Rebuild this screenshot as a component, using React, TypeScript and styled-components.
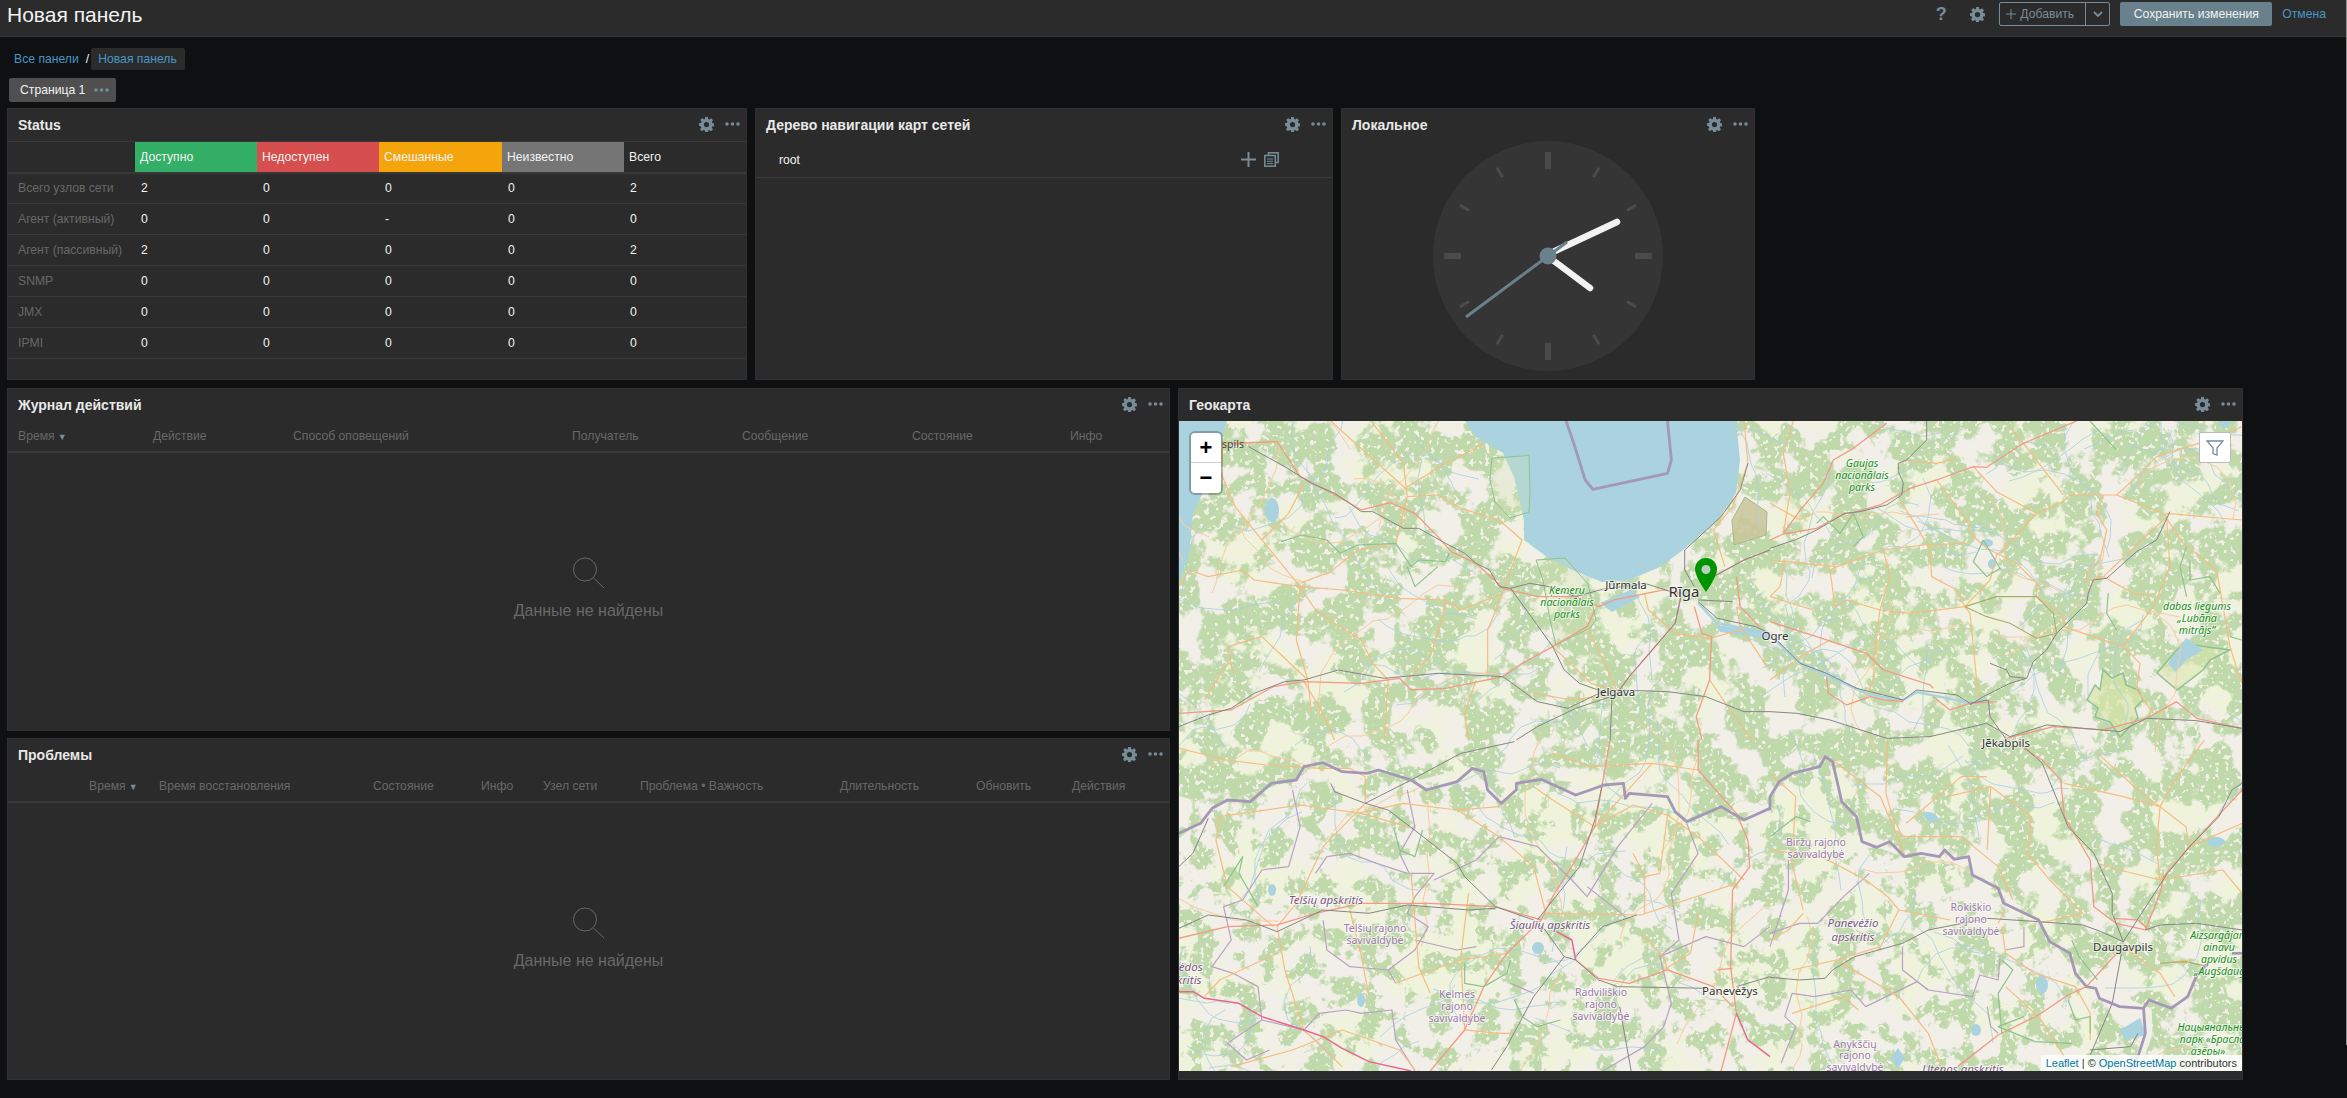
import React from "react";
import styled, { createGlobalStyle } from "styled-components";

const Global = createGlobalStyle`
  html, body { margin: 0; padding: 0; background: #0e1012; }
  body { font-family: "Liberation Sans", Arial, sans-serif; font-size: 12.2px; color: #f2f2f2; overflow: hidden; }
  * { box-sizing: border-box; }
`;

const Page = styled.div`
  position: relative;
  width: 2347px;
  height: 1098px;
  overflow: hidden;
  background: #0e1012;
`;
const ScrollEdge = styled.div`
  position: absolute;
  top: 0;
  right: 0;
  width: 1px;
  height: 1045px;
  background: #8f8f8f;
`;
const Header = styled.header`
  height: 37px;
  background: #2b2b2b;
  border-bottom: 1px solid #383838;
  display: flex;
  align-items: flex-start;
  padding: 2px 21px 0 7px;
`;
const Title = styled.h1`
  margin: 0;
  font-size: 21px;
  line-height: 26px;
  font-weight: 400;
  color: #f2f2f2;
  flex: 1;
`;
const HeaderIcon = styled.span`
  width: 36px;
  height: 24px;
  display: flex;
  align-items: center;
  justify-content: center;
  color: #768d99;
  font-size: 18px;
  font-weight: 700;
`;
const AddButton = styled.div`
  width: 111px;
  height: 24px;
  margin-left: 4px;
  border: 1px solid #768d99;
  border-radius: 2px;
  display: flex;
  align-items: center;
  color: #768d99;
`;
const AddMain = styled.span`
  width: 86px;
  display: flex;
  align-items: center;
  gap: 4px;
  padding-left: 6px;
  height: 100%;
  border-right: 1px solid #768d99;
`;
const AddCaret = styled.span`
  flex: 1;
  display: flex;
  justify-content: center;
`;
const SaveButton = styled.div`
  width: 152px;
  height: 24px;
  margin-left: 10px;
  border-radius: 2px;
  background: #69808d;
  color: #f2f2f2;
  display: flex;
  align-items: center;
  justify-content: center;
`;
const CancelLink = styled.a`
  margin-left: 10px;
  line-height: 24px;
  color: #4796c4;
`;
const Crumbs = styled.nav`
  height: 22px;
  margin: 11px 0 0 14px;
  display: flex;
  align-items: center;
  color: #f2f2f2;
`;
const CrumbLink = styled.a`
  color: #4796c4;
`;
const CrumbSep = styled.span`
  margin: 0 2px 0 7px;
`;
const CrumbCurrent = styled.a`
  color: #4796c4;
  background: #2b2b2b;
  border-radius: 2px;
  height: 22px;
  line-height: 22px;
  padding: 0 8px 0 7px;
`;
const Tab = styled.div`
  width: 107px;
  height: 24px;
  margin: 8px 0 6px 9px;
  background: #4f4f4f;
  border-radius: 2px;
  display: flex;
  align-items: center;
  justify-content: space-between;
  padding: 0 7px 0 11px;
  color: #f2f2f2;
`;
const Dashboard = styled.main`
  display: flex;
  flex-direction: column;
  gap: 8px;
  padding-left: 7px;
`;
const Row = styled.div`
  display: flex;
  gap: 8px;
`;
const Column = styled.div`
  display: flex;
  flex-direction: column;
  gap: 7px;
`;
const Panel = styled.section<{ $w: number; $h: number }>`
  width: ${(p) => p.$w}px;
  height: ${(p) => p.$h}px;
  background: #2b2b2b;
  border: 1px solid #303030;
  display: flex;
  flex-direction: column;
  overflow: hidden;
  flex: none;
`;
const PanelHead = styled.div`
  height: 32px;
  flex: none;
  display: flex;
  align-items: flex-start;
  padding: 0 6px 0 10px;
`;
const PanelTitle = styled.h4`
  margin: 0;
  flex: 1;
  font-size: 14px;
  line-height: 33px;
  font-weight: 700;
  color: #e8e8e8;
`;
const PanelTools = styled.div`
  display: flex;
  align-items: center;
  gap: 11px;
  height: 30px;
  color: #768d99;
`;
const StatusTable = styled.table`
  width: 100%;
  table-layout: fixed;
  border-collapse: collapse;
`;
const Th = styled.th<{ $bg?: string }>`
  height: 31px;
  padding: 0 5px;
  text-align: left;
  font-weight: 400;
  color: #f2f2f2;
  background: ${(p) => p.$bg || "transparent"};
`;
const HeadRow = styled.tr`
  border-top: 1px solid #383838;
  border-bottom: 2px solid #383838;
`;
const BodyRow = styled.tr`
  border-bottom: 1px solid #383838;
`;
const LabelCell = styled.td`
  height: 31px;
  padding: 0 0 0 10px;
  color: #686868;
  white-space: nowrap;
`;
const ValueCell = styled.td`
  padding: 0 0 0 6px;
  color: #f2f2f2;
`;
const TreeRow = styled.div`
  height: 33px;
  margin-top: 4px;
  flex: none;
  display: flex;
  align-items: center;
  border-bottom: 1px solid #383838;
  padding: 0 0 3px 23px;
  color: #f2f2f2;
`;
const TreeName = styled.span`
  flex: 1;
`;
const TreeTools = styled.span`
  display: flex;
  gap: 8px;
  margin-right: 53px;
  color: #768d99;
`;
const ClockWrap = styled.div`
  flex: 1;
  display: flex;
  justify-content: center;
`;
const ColumnsHead = styled.div<{ $cols: string; $pad: number }>`
  height: 32px;
  flex: none;
  display: grid;
  grid-template-columns: ${(p) => p.$cols};
  align-items: center;
  border-bottom: 2px solid #383838;
  color: #686868;
  padding-left: ${(p) => p.$pad}px;
`;
const Arrow = styled.span`
  color: #768d99;
  font-size: 9px;
  margin-left: 3px;
`;
const Empty = styled.div`
  flex: 1;
  display: flex;
  flex-direction: column;
  align-items: center;
  justify-content: center;
  padding-bottom: 6px;
  color: #686868;
  font-size: 16px;
`;
const EmptyText = styled.div`
  line-height: 18px;
  margin-top: 13px;
`;
const MapArea = styled.div`
  position: relative;
  width: 1063px;
  height: 650px;
  flex: none;
  overflow: hidden;
  background: #f2efe9;
`;
const MapSvg = styled.svg`
  display: block;
  width: 1063px;
  height: 650px;
`;
const ZoomBox = styled.div`
  position: absolute;
  left: 12px;
  top: 12px;
  width: 30px;
  border-radius: 4px;
  outline: 2px solid rgba(0, 0, 0, 0.25);
  background: #fff;
  overflow: hidden;
`;
const ZoomBtn = styled.div<{ $first?: boolean }>`
  height: 30px;
  background: #fff;
  color: #000;
  display: flex;
  align-items: center;
  justify-content: center;
  font: 700 22px/30px "Liberation Sans", Arial, sans-serif;
  border-bottom: ${(p) => (p.$first ? "1px solid #ccc" : "none")};
`;
const FilterBtn = styled.div`
  position: absolute;
  right: 11px;
  top: 11px;
  width: 32px;
  height: 31px;
  background: #fff;
  border-radius: 2px;
  border: 1px solid #bbb;
  color: #768d99;
  display: flex;
  align-items: center;
  justify-content: center;
`;
const Attribution = styled.div`
  position: absolute;
  right: 0;
  bottom: 0;
  height: 16px;
  padding: 0 5px;
  background: rgba(255, 255, 255, 0.8);
  color: #333;
  font: 11px/16px "Liberation Sans", Arial, sans-serif;
`;
const AttrLink = styled.a`
  color: #0078a8;
`;
const MapText = styled.text<{ $kind: string }>`
  font-family: "Noto Sans", "Open Sans", sans-serif;
  font-size: ${(p) => (p.$kind === "capital" ? 15 : p.$kind === "city" ? 11.5 : p.$kind === "region" ? 11.5 : 10.5)}px;
  font-style: ${(p) => (p.$kind === "park" || p.$kind === "region" ? "italic" : "normal")};
  fill: ${(p) =>
    p.$kind === "park" ? "#1b8f1b" : p.$kind === "region" ? "#7d5a88" : p.$kind === "muni" ? "#9a7ba6" : "#333"};
  text-anchor: middle;
  paint-order: stroke;
  stroke: rgba(255, 255, 255, 0.6);
  stroke-width: 2px;
`;

const Gear = ({ size = 15 }: { size?: number }) => (
  <svg width={size} height={size} viewBox="0 0 16 16" fill="currentColor" aria-hidden>
    <path d="M6.6 0h2.8l.4 2.2 1.2.5 1.9-1.3 2 2-1.3 1.9.5 1.2 2.2.4v2.8l-2.2.4-.5 1.2 1.3 1.9-2 2-1.9-1.3-1.2.5-.4 2.2H6.6l-.4-2.2-1.2-.5-1.9 1.3-2-2 1.3-1.9-.5-1.2L0 9.4V6.6l2.2-.4.5-1.2-1.3-1.9 2-2L5.300 2.700l1-.5zM8 5.200a2.800 2.800 0 100 5.600 2.800 2.800 0 000-5.600z" fillRule="evenodd" />
  </svg>
);
const Dots = () => (
  <svg width="15" height="4" viewBox="0 0 15 4" fill="currentColor" aria-hidden>
    <circle cx="2" cy="2" r="1.8" />
    <circle cx="7.500" cy="2" r="1.8" />
    <circle cx="13" cy="2" r="1.8" />
  </svg>
);
const Plus = ({ size = 15, w = 2 }: { size?: number; w?: number }) => (
  <svg width={size} height={size} viewBox="0 0 15 15" stroke="currentColor" strokeWidth={w} aria-hidden>
    <path d="M7.500 0v15M0 7.500h15" />
  </svg>
);
const Copy = () => (
  <svg width="15" height="15" viewBox="0 0 15 15" fill="none" stroke="currentColor" strokeWidth="1.500" aria-hidden>
    <path d="M4.500 3V.8h9.700v9.700H12" />
    <rect x=".8" y="3.500" width="10.500" height="10.700" />
    <path d="M3 7h6M3 9.300h6M3 11.600h6" strokeWidth="1" />
  </svg>
);
const Search = () => (
  <svg width="32" height="32" viewBox="0 0 32 32" fill="none" stroke="#686868" strokeWidth="1" aria-hidden>
    <circle cx="12" cy="12.500" r="11.500" />
    <path d="M20.500 21l10.500 10" />
  </svg>
);

const ClockFace = styled.svg`
  display: block;
`;
const Clock = () => {
  const ticks = [];
  for (let i = 0; i < 12; i++) {
    const major = i % 3 === 0;
    ticks.push(
      <rect
        key={i}
        x={major ? 112 : 113.5}
        y={major ? 11 : 13}
        width={major ? 6 : 3}
        height={major ? 17 : 11}
        fill="#4b4b4b"
        transform={`rotate(${i * 30} 115 115)`}
      />
    );
  }
  return (
    <ClockFace width="230" height="230" viewBox="0 0 230 230" aria-hidden>
      <circle cx="115" cy="115" r="115" fill="#353535" />
      {ticks}
      <line x1="122" y1="110" x2="184" y2="81" stroke="#f2f2f2" strokeWidth="6.500" strokeLinecap="round" />
      <line x1="121" y1="120" x2="157" y2="147" stroke="#f2f2f2" strokeWidth="6.500" strokeLinecap="round" />
      <line x1="33" y1="176" x2="134" y2="101" stroke="#69808d" strokeWidth="3" />
      <circle cx="115" cy="115" r="8.500" fill="#69808d" />
    </ClockFace>
  );
};

type Line = [string, string];
const A: Line[] = [
  ["primary", "M1500 123 L1510 250 L1470 380 L1420 450 L1450 560"],
  ["primary", "M340 620 L240 480 L170 380 L130 270 L140 190"],
  ["primary", "M340 620 L450 630 L600 655 L720 660 L760 690 L870 640"],
  ["primary", "M340 610 L420 575 L490 510 L590 490 L620 350 L610 250 L530 130"],
  ["primary", "M240 480 L310 400 L350 310"],
  ["primary", "M620 350 L700 345 L760 385 L860 420 L920 480 L890 570 L870 630"],
  ["primary", "M620 320 L720 250 L790 210 L820 190"],
  ["primary", "M340 620 L380 690 L430 730 L500 780 L530 850 L570 900"],
  ["primary", "M720 660 L710 720 L680 830 L620 900"],
  ["primary", "M870 640 L830 750 L830 880"],
  ["primary", "M340 620 L330 780 L360 900 L370 1000"],
  ["primary", "M340 620 L220 600 L190 570 L100 590 L50 570 L23 620"],
  ["primary", "M360 900 L240 770 L150 800 L165 880"],
  ["primary", "M150 850 L90 960"],
  ["primary", "M1000 800 L1100 910 L1160 930"],
  ["primary", "M1090 740 L1140 860 L1170 940"],
  ["primary", "M1240 640 L1250 690 L1320 760 L1410 775 L1490 750"],
  ["primary", "M1480 680 L1490 740 L1560 860"],
  ["primary", "M1410 900 L1470 1000 L1520 1080"],
  ["primary", "M140 190 L280 185"],
  ["primary", "M420 123 L620 330"],
  ["primary", "M570 900 L560 1080"],
  ["primary", "M800 900 L770 1000 L780 1080"],
  ["primary", "M350 905 L400 1000 L430 1080"],
  ["primary", "M950 940 L1050 960 L1150 945"],
  ["trunk", "M160 190 L280 185 L340 290 L440 350 L500 390 L575 368 L640 400 L700 470 L735 515 L800 550 L870 625 L960 650 L1060 650 L1120 680 L1160 660 L1290 630 L1340 640"],
  ["trunk", "M1110 690 L1090 740 L1000 800 L920 850 L870 890 L720 925 L630 930 L600 895 L500 910 L350 905 L270 920 L160 990 L23 1000"],
  ["trunk", "M1335 650 L1320 730 L1260 810 L1200 890 L1165 945"],
  ["trunk", "M1370 680 L1390 760 L1415 770 L1410 900 L1375 1010 L1390 1080"],
  ["trunk", "M1420 590 L1500 540 L1568 510"],
  ["trunk", "M1480 590 L1490 680 L1540 740"],
  ["rail", "M205 200 L300 260 L370 310 L430 340 L470 370 L500 395 L530 395 L610 445 L650 445 L720 490 L770 520 L800 550 L835 570 L860 620 L890 625 L940 610 L990 620 L1060 650 L1130 628 L1180 620 L1240 610 L1310 635"],
  ["rail", "M890 625 L950 720 L1000 800 L1030 870 L1070 910 L1130 935"],
  ["rail", "M1130 935 L1040 985 L960 965 L870 890 L700 880 L560 895 L440 870 L350 900 L300 905 L220 940 L160 985 L100 1005 L23 1040"],
  ["rail", "M1335 650 L1320 730 L1260 810 L1200 890 L1165 945 L1060 985 L960 1040 L905 1080"],
  ["rail", "M1165 930 L1300 935 L1400 950 L1500 995 L1568 995"],
  ["rail", "M1155 950 L1150 1080"],
  ["rail", "M1380 665 L1430 715 L1530 740 L1568 760"],
  ["rail", "M1420 590 L1500 540 L1568 510"],
  ["rail", "M1510 250 L1490 330 L1440 410 L1345 510 L1345 570 L1370 620"],
  ["rail", "M1380 660 L1470 665"],
  ["border", "M1035 123 L1055 190 L1085 300 L1105 328 L1300 280 L1310 240 L1300 123"],
  ["park", "M290 485 L345 465 L410 480 L445 520 L490 495 L590 490 L630 560 L650 540 L720 545 L730 520"],
  ["park", "M620 560 L640 620 L700 560"],
];
const B: Line[] = [
  ["primary", "M500 300 L560 380 L595 430 L600 460 L650 505 L690 525 L740 550 L800 610 L800 650 L870 700 L890 735"],
  ["primary", "M610 260 L680 335 L800 400 L880 365 L900 345 L1040 345 L1180 400 L1240 490 L1340 570 L1380 800 L1415 910"],
  ["primary", "M800 400 L700 510 L680 525 L660 600 L585 680"],
  ["primary", "M390 360 L440 440 L480 510 L485 590 L560 630 L585 680 L600 700 L620 900 L630 955"],
  ["primary", "M340 510 L460 495 L590 490"],
  ["primary", "M340 510 L200 560 L0 540"],
  ["primary", "M200 560 L180 570 L195 680 L230 660 L330 690 L420 700 L585 680"],
  ["primary", "M330 690 L315 800 L310 900 L290 950"],
  ["primary", "M130 690 L0 650"],
  ["primary", "M880 740 L1060 800 L1110 850 L1100 930 L1150 1000"],
  ["primary", "M1060 800 L1150 680 L1200 560 L1190 410"],
  ["primary", "M1000 345 L980 400 L1010 450 L990 540 L950 580 L950 610"],
  ["primary", "M960 600 L1000 590 L1180 420"],
  ["primary", "M760 190 L880 345"],
  ["primary", "M720 140 L760 190"],
  ["primary", "M1190 400 L1415 420"],
  ["primary", "M1040 345 L1100 290 L1160 230 L1350 170 L1415 140"],
  ["primary", "M1000 590 L1090 640 L1150 650"],
  ["primary", "M70 123 L40 220 L60 340 L40 460"],
  ["primary", "M0 370 L90 420 L130 400"],
  ["primary", "M340 510 L360 590 L330 690"],
  ["primary", "M180 780 L90 830 L0 900"],
  ["primary", "M45 540 L30 620 L0 650"],
  ["primary", "M400 240 L500 250 L560 235"],
  ["trunk", "M0 480 L40 462 L140 445 L225 400 L250 398 L330 375 L420 325 L500 300 L610 260 L650 262 L760 190 L920 123"],
  ["trunk", "M40 460 L95 385 L160 310 L190 240 L250 205 L350 130"],
  ["trunk", "M0 725 L170 780 L290 820 L340 870 L480 915 L490 925"],
  ["trunk", "M170 890 L175 940 L230 975 L300 950 L340 960 L400 965"],
  ["trunk", "M490 950 L540 990 L600 970 L680 965"],
  ["trunk", "M710 1075 L850 1040 L1000 1050 L1130 1015 L1220 965 L1280 1015 L1415 1045"],
  ["rail", "M0 505 L80 478 L140 450 L225 400 L270 395 L350 375 L395 345 L400 310 L385 275 L385 250 L410 240 L470 180 L470 123"],
  ["rail", "M1200 395 L1160 480 L1100 515 L1010 595 L970 600 L955 640 L950 670 L880 740 L860 760 L830 810 L790 845 L770 895 L720 910 L640 950 L600 975"],
  ["rail", "M660 850 L710 870 L720 890 L770 895"],
  ["rail", "M20 780 L90 850 L170 880 L260 925 L400 960 L440 930 L560 945 L600 970 L655 960 L660 1010 L710 1080"],
  ["rail", "M0 995 L80 1000 L180 1020 L350 1075 L480 1070 L650 1030 L720 1070 L830 1035 L1050 1055 L1130 1015 L1280 1022 L1415 1045"],
  ["park", "M960 123 L1030 200 L1040 210"],
  ["park", "M140 430 L160 410 L210 460 L250 400 L280 470 L250 500"],
  ["park", "M640 480 L610 545 L650 590 L690 565 L640 480"],
  ["park", "M1250 500 L1230 560 L1250 650"],
  ["park", "M1015 640 L1010 700 L1040 750"],
  ["park", "M1260 540 L1260 600 L1320 590 L1350 640"],
  ["park", "M1380 770 L1415 780"],
  ["olive", "M585 680 L650 710 L720 730 L800 775 L860 760 L850 700 L800 650 L680 650 L585 680"],
];
const C: Line[] = [
  ["admin", "M320 150 L340 260 L310 380 L240 390 L190 480 L140 500 L160 600 L110 680 L165 700 L230 740 L240 840 L350 870 L390 820 L460 810 L500 820 L580 810 L590 900 L640 993"],
  ["admin", "M620 150 L640 260 L600 340 L625 400 L690 400 L640 470 L620 520 L675 560 L640 630 L570 690 L590 730"],
  ["admin", "M380 400 L410 350 L470 340 L540 370 L620 400"],
  ["admin", "M400 540 L410 630 L470 680 L570 690"],
  ["admin", "M690 420 L800 360 L860 290 L960 320 L1050 420 L1090 470 L1170 320 L1260 190"],
  ["admin", "M640 600 L750 630 L800 620"],
  ["admin", "M1350 250 L1380 340 L1310 460 L1330 600 L1280 650 L1310 790 L1290 860 L1240 920 L1180 960 L1130 993"],
  ["admin", "M1090 440 L1190 530"],
  ["admin", "M1280 650 L1400 590 L1500 620 L1568 560"],
  ["admin", "M890 730 L950 760"],
  ["admin", "M240 840 L150 910 L200 960 L260 930"],
  ["primary", "M23 25 L150 60 L250 75 L390 85 L470 85 L510 110 L510 190 L400 320 L330 490 L280 560 L300 690 L350 870 L450 980"],
  ["primary", "M130 230 L120 300 L150 440 L270 560"],
  ["primary", "M130 230 L340 195 L500 220 L620 260"],
  ["primary", "M490 220 L610 190 L750 210 L860 200 L900 150"],
  ["primary", "M750 210 L860 290 L950 380 L980 510"],
  ["primary", "M630 400 L650 680 L680 760"],
  ["primary", "M470 510 L500 650 L520 770"],
  ["primary", "M780 460 L760 650 L770 870"],
  ["primary", "M980 520 L1230 525 L1480 430"],
  ["primary", "M1500 420 L1380 290 L1300 225 L1210 195 L1110 260 L1000 180 L950 140"],
  ["primary", "M1240 410 L1280 400 L1300 225"],
  ["primary", "M1240 520 L1240 410 L1210 340"],
  ["primary", "M590 730 L660 700 L760 660 L880 640"],
  ["primary", "M1110 260 L1260 70 L1380 90"],
  ["primary", "M1000 40 L1100 80 L1260 70"],
  ["primary", "M1230 580 L1290 650 L1300 690"],
  ["primary", "M90 770 L130 720 L280 640"],
  ["primary", "M160 980 L320 930 L450 870 L600 930 L640 990"],
  ["primary", "M770 870 L860 880 L900 880"],
  ["primary", "M1380 520 L1360 640 L1290 690"],
  ["trunk", "M1150 0 L1130 130 L1110 260 L1060 360 L1000 470 L970 540 L880 640 L820 740 L770 870 L680 993"],
  ["trunk", "M380 520 L500 490 L680 490 L850 500 L970 540"],
  ["trunk", "M23 595 L150 560 L280 555 L380 520"],
  ["trunk", "M1380 0 L1380 90 L1480 220 L1510 300 L1515 380 L1470 450 L1465 680 L1480 820 L1440 993"],
  ["trunk", "M1060 660 L1120 715 L1200 730 L1300 690 L1420 740 L1470 800"],
  ["trunk", "M1430 690 L1470 685"],
  ["pink", "M23 755 L60 755 L90 775 L180 790 L240 830 L350 870 L400 890 L450 925 L520 965 L630 993"],
  ["pink", "M1010 575 L1050 600 L1060 660"],
  ["pink", "M1480 820 L1510 900 L1568 950"],
  ["rail", "M420 130 L430 155 L510 190 L570 210 L650 280 L750 370 L770 410 L850 500 L950 540 L980 570 L1030 650 L1060 660 L1120 720 L1170 740 L1400 745"],
  ["rail", "M510 190 L630 120 L760 40 L900 5"],
  ["rail", "M23 565 L100 525 L200 540 L280 575 L400 510 L520 520 L620 495 L780 510 L850 505"],
  ["rail", "M1030 650 L950 770 L880 920 L840 990"],
  ["rail", "M1060 650 L1130 560 L1220 525"],
  ["rail", "M960 540 L1070 380 L1110 240 L1130 130"],
  ["rail", "M1175 800 L1205 993"],
  ["rail", "M23 380 L60 340 L100 235"],
  ["rail", "M1480 740 L1568 710"],
  ["park", "M140 440 L190 350 L180 400 L230 500"],
  ["park", "M585 265 L600 330 L640 350 L660 270"],
  ["park", "M770 670 L770 730 L820 740 L880 700 L890 660"],
  ["park", "M900 780 L920 830 L960 860 L1020 840"],
  ["border", "M23 280 L80 250 L110 205 L150 180 L210 185 L265 130 L330 120 L350 80 L400 68 L450 95 L515 100 L545 90 L630 120 L670 150 L750 125 L790 85 L820 95 L830 150 L865 190 L905 150 L905 130 L970 118 L1060 165 L1135 135 L1185 130 L1190 175 L1200 160 L1300 170 L1320 215 L1350 245 L1440 200 L1500 240 L1568 205"],
];
const D: Line[] = [
  ["admin", "M50 360 L50 450 L0 620"],
  ["admin", "M270 400 L200 470 L130 550 L80 550 L0 580"],
  ["admin", "M625 655 L620 720 L570 705 L550 770 L430 750 L400 725 L260 800 L220 750 L120 770 L60 760 L40 830 L70 860 L30 970"],
  ["admin", "M360 620 L360 690 L430 750"],
  ["admin", "M690 560 L690 620 L640 630"],
  ["admin", "M590 800 L600 860 L620 880"],
  ["primary", "M170 60 L300 170 L350 300 L365 350"],
  ["primary", "M320 0 L315 160 L330 220 L360 290 L520 290 L620 380 L660 480"],
  ["primary", "M600 140 L590 330"],
  ["primary", "M600 140 L710 230 L700 340 L760 420 L850 520"],
  ["primary", "M590 110 L520 110 L370 250"],
  ["primary", "M600 140 L480 170"],
  ["primary", "M800 130 L960 170 L1060 200 L1130 260 L1140 320 L1060 420 L950 390 L890 370"],
  ["primary", "M1060 200 L1095 130 L1180 0"],
  ["primary", "M1060 200 L1050 320 L1060 420"],
  ["primary", "M730 550 L850 520"],
  ["primary", "M640 510 L620 550"],
  ["primary", "M90 520 L50 570 L0 600"],
  ["primary", "M90 510 L60 370 L70 170 L0 100"],
  ["primary", "M0 330 L140 350 L260 420 L320 470 L350 510 L490 540"],
  ["primary", "M350 510 L300 620 L180 660 L60 690"],
  ["primary", "M180 660 L350 770 L430 880 L470 993"],
  ["primary", "M630 560 L640 640 L720 700 L830 740 L870 820 L870 900"],
  ["primary", "M640 740 L730 830 L800 950"],
  ["primary", "M960 620 L1060 700 L1100 770"],
  ["primary", "M1060 670 L1140 660"],
  ["primary", "M1283 250 L1140 320"],
  ["primary", "M1283 460 L1230 390 L1060 420"],
  ["primary", "M890 40 L1000 150 L1060 200"],
  ["primary", "M240 810 L200 770 L60 820"],
  ["trunk", "M1283 150 L1140 320 L1070 410 L1060 460 L1020 570 L940 550 L880 500 L870 360"],
  ["trunk", "M870 360 L800 230 L790 120 L740 60 L690 25"],
  ["trunk", "M950 630 L860 740 L810 765 L730 825 L620 885 L510 980"],
  ["trunk", "M935 535 L1000 540 L1030 570"],
  ["rail", "M1283 130 L1255 150 L1220 230 L1140 320 L1080 400 L960 605 L930 520 L930 460 L880 340 L810 260 L740 70 L690 20"],
  ["rail", "M960 605 L900 575 L850 555 L730 545 L590 535 L500 555 L430 570 L360 610 L230 650 L170 690 L150 715 L80 720 L0 712"],
  ["rail", "M955 640 L930 790 L880 920 L870 945"],
  ["rail", "M1020 570 L1060 555 L1160 550 L1283 570"],
  ["rail", "M870 930 L980 920 L1000 880"],
  ["park", "M0 290 L70 230 L110 245"],
  ["park", "M630 660 L660 690 L620 760 L630 880"],
  ["park", "M820 600 L840 650 L890 720"],
  ["park", "M810 780 L830 840 L870 830 L870 880"],
  ["park", "M690 830 L620 860 L720 905 L820 910"],
  ["olive", "M1060 670 L1130 665 L1190 680"],
  ["border", "M0 210 L0 170 L25 125 L60 100 L135 80 L150 50 L170 65 L195 185 L235 230 L250 305 L290 322 L325 305 L365 350 L410 340 L460 350 L475 330 L500 358 L540 350 L550 405 L620 445 L635 490 L730 540 L760 605 L815 640 L830 700 L860 740 L885 745 L895 775 L950 800 L1015 805 L1030 780 L1090 805 L1135 770 L1160 705 L1190 670"],
  ["border", "M1015 805 L1020 880 L1000 950 L980 993"],
  ["border", "M1255 640 L1283 640"],
];

const STROKES: Record<string, { c: string; w: number }> = {
  primary: { c: "#f6bd80", w: 1.200 },
  trunk: { c: "#f39a82", w: 1.300 },
  pink: { c: "#e9668b", w: 1.500 },
  rail: { c: "#868686", w: 1 },
  border: { c: "#a597b6", w: 2.800 },
  admin: { c: "#b7a3c1", w: 1.200 },
  park: { c: "#8ec28e", w: 1.200 },
  olive: { c: "#a9b06a", w: 1.100 },
};

const Lines = ({ items, tf }: { items: Line[]; tf: string }) => (
  <g transform={tf} fill="none" strokeLinejoin="round">
    {items.map(([k, d], i) => (
      <path key={i} d={d} stroke={STROKES[k].c} strokeWidth={STROKES[k].w} vectorEffect="non-scaling-stroke" />
    ))}
  </g>
);

function wiggles(seed: number, count: number, lo: number, hi: number) {
  let s = seed;
  const r = () => {
    s = (s * 1664525 + 1013904223) % 4294967296;
    return s / 4294967296;
  };
  const out: string[] = [];
  for (let i = 0; i < count; i++) {
    let x = 1179 + r() * 1063;
    let y = 421 + r() * 650;
    if (x > 1470 && x < 1740 && y < 570) x = 1750 + r() * 480;
    let a = r() * Math.PI * 2;
    let d = `M${x.toFixed(0)} ${y.toFixed(0)}`;
    const n = 5 + Math.floor(r() * 7);
    for (let j = 0; j < n; j++) {
      a += (r() - 0.5) * 1.200;
      const l = lo + r() * hi;
      x += Math.cos(a) * l;
      y += Math.sin(a) * l;
      d += ` L${x.toFixed(0)} ${y.toFixed(0)}`;
    }
    out.push(d);
  }
  return out;
}
const RIVERS = wiggles(1234567, 120, 8, 14);
const MINOR = wiggles(987654, 30, 10, 16);

const LABELS: [string, number, number, string][] = [
  ["Jūrmala", 1626, 589, "city"],
  ["Rīga", 1684, 597, "capital"],
  ["Ogre", 1775, 640, "city"],
  ["Jelgava", 1616, 696, "city"],
  ["Jēkabpils", 2006, 747, "city"],
  ["Panevėžys", 1730, 995, "city"],
  ["Daugavpils", 2123, 951, "city"],
  ["Ķemeru", 1567, 594, "park"],
  ["nacionālais", 1567, 606, "park"],
  ["parks", 1567, 618, "park"],
  ["Gaujas", 1862, 467, "park"],
  ["nacionālais", 1862, 479, "park"],
  ["parks", 1862, 491, "park"],
  ["dabas liegums", 2197, 610, "park"],
  ["„Lubāna", 2197, 622, "park"],
  ["mitrājs”", 2197, 634, "park"],
  ["Aizsargājamo", 2222, 939, "park"],
  ["ainavu", 2219, 951, "park"],
  ["apvidus", 2219, 963, "park"],
  ["„Augšdaugava", 2228, 975, "park"],
  ["Нацыянальны", 2212, 1031, "park"],
  ["парк «Браслаўскія", 2224, 1043, "park"],
  ["азёры»", 2208, 1055, "park"],
  ["Telšių apskritis", 1326, 904, "region"],
  ["Šiaulių apskritis", 1550, 929, "region"],
  ["Panevėžio", 1853, 927, "region"],
  ["apskritis", 1853, 941, "region"],
  ["Utenos apskritis", 1963, 1073, "region"],
  ["Klaipėdos", 1178, 971, "region"],
  ["apskritis", 1180, 984, "region"],
  ["Telšių rajono", 1375, 932, "muni"],
  ["savivaldybė", 1375, 944, "muni"],
  ["Kelmės", 1457, 998, "muni"],
  ["rajono", 1457, 1010, "muni"],
  ["savivaldybė", 1457, 1022, "muni"],
  ["Radviliškio", 1601, 996, "muni"],
  ["rajono", 1601, 1008, "muni"],
  ["savivaldybė", 1601, 1020, "muni"],
  ["Biržų rajono", 1816, 846, "muni"],
  ["savivaldybė", 1816, 858, "muni"],
  ["Rokiškio", 1971, 911, "muni"],
  ["rajono", 1971, 923, "muni"],
  ["savivaldybė", 1971, 935, "muni"],
  ["Anykščių", 1855, 1048, "muni"],
  ["rajono", 1855, 1059, "muni"],
  ["savivaldybė", 1855, 1071, "muni"],
];

const SOUTH =
  "1179,833 1227,800 1296,780 1323,763 1411,780 1472,768 1501,803 1541,779 1604,785 1625,798 1667,797 1687,822 1770,808 1779,782 1825,757 1842,802 1862,842 1904,857 1969,857 1972,875 2039,920 2075,973 2099,998 2144,1008 2145,1033 2131,1071 1179,1071";
const NORTH_CLIP = `polygon(0 0, 100% 0, 100% 100%, 90.300% 100%, 91.600% 94.300%, 91.500% 90.400%, 89.200% 88.800%, 84.500% 85.100%, 80.800% 76.900%, 74.600% 70.000%, 74.400% 67.200%, 68.200% 67.200%, 64.200% 64.800%, 62.300% 58.700%, 60.700% 51.800%, 56.400% 55.700%, 55.600% 59.700%, 47.800% 61.800%, 45.900% 57.300%, 42.000% 57.200%, 40.800% 55.200%, 34.100% 55.800%, 30.600% 58.500%, 27.300% 53.300%, 21.400% 55.700%, 13.500% 52.600%, 11.000% 55.200%, 4.500% 58.300%, 0 64.200%)`;

const Noise = ({ id, f, seed, color, slope, cut, oct = 5 }: { id: string; f: number; seed: number; color: string; slope: number; cut: number; oct?: number }) => {
  const hex = (i: number) => parseInt(color.slice(i, i + 2), 16) / 255;
  return (
    <filter id={id} x="0" y="0" width="100%" height="100%" colorInterpolationFilters="sRGB">
      <feTurbulence type="fractalNoise" baseFrequency={f} numOctaves={oct} seed={seed} />
      <feColorMatrix
        type="matrix"
        values={`0 0 0 0 ${hex(1)} 0 0 0 0 ${hex(3)} 0 0 0 0 ${hex(5)} 0 0 0 1 0`}
      />
      <feComponentTransfer>
        <feFuncA type="linear" slope={slope} intercept={-slope * cut} />
      </feComponentTransfer>
      <feGaussianBlur stdDeviation="0.45" />
    </filter>
  );
};

const GeoMap = () => (
  <MapSvg viewBox="1179 421 1063 650" aria-hidden>
    <defs>
      <Noise id="farm" f={0.014} seed={3} color="#eff3da" slope={7} cut={0.46} oct={3} />
      <Noise id="forestN" f={0.03} seed={11} color="#bfd9ab" slope={14} cut={0.44} />
      <Noise id="forestS" f={0.042} seed={23} color="#bfd9ab" slope={14} cut={0.505} />
      <Noise id="specks" f={0.2} seed={31} color="#f2efe7" slope={14} cut={0.6} oct={2} />
      <clipPath id="southClip">
        <polygon points={SOUTH} />
      </clipPath>
    </defs>
    <rect x="1179" y="421" width="1063" height="650" fill="#f2efe9" />
    <rect x="1179" y="421" width="1063" height="650" filter="url(#farm)" />
    <rect x="1179" y="421" width="1063" height="650" filter="url(#forestS)" clipPath="url(#southClip)" />
    <rect x="1179" y="421" width="1063" height="650" filter="url(#forestN)" style={{ clipPath: NORTH_CLIP }} />
    <rect x="1179" y="421" width="1063" height="650" filter="url(#specks)" />
    <polygon points="1179,421 1227,421 1222,435 1220,453 1204,490 1193,513 1189,553 1180,580 1179,582" fill="#aad3df" />
    <polygon
      points="1465,421 1476,437 1503,453 1514,477 1524,520 1524,540 1547,557 1572,570 1602,582 1629,580 1660,567 1683,550 1717,520 1736,493 1740,460 1736,421"
      fill="#aad3df"
    />
    <polygon points="1523,456 1529,455 1530,490 1529,512 1510,518 1495,502 1490,480 1492,458" fill="#cfe2b2" fillOpacity="0.3" stroke="#8ec28e" strokeWidth="1" />
    <polygon points="1536,560 1565,558 1588,584 1596,620 1590,628 1556,645 1550,620 1543,580" fill="#cfe2b2" fillOpacity="0.3" stroke="#8ec28e" strokeWidth="1" />
    <polygon points="1745,497 1767,512 1766,535 1734,545 1732,520" fill="#c9c49a" fillOpacity="0.85" stroke="#a8b78a" strokeWidth="1" />
    <polygon points="2157,673 2183,643 2207,647 2230,650 2210,660 2203,670 2177,690" fill="#d9e6ad" fillOpacity="0.55" stroke="#8ec28e" strokeWidth="1.500" />
    <polygon
      points="2087,700 2095,685 2100,690 2103,670 2112,678 2123,673 2126,685 2138,690 2143,700 2135,708 2138,718 2120,737 2110,722 2095,717 2098,708"
      fill="#d7e3a8"
      fillOpacity="0.65"
      stroke="#8ec28e"
      strokeWidth="1.500"
    />
    <g fill="#aad3df">
      <polygon points="1600,603 1630,590 1640,597 1612,612" />
      <polygon points="1715,625 1767,632 1775,640 1720,632" />
      <polygon points="2168,663 2186,638 2203,650 2186,660 2176,672" />
      <polygon points="2218,421 2232,421 2224,430" />
      <ellipse cx="1987" cy="543" rx="6" ry="4" />
      <ellipse cx="1992" cy="564" rx="4" ry="5" />
      <ellipse cx="1272" cy="510" rx="7" ry="12" />
      <ellipse cx="1272" cy="890" rx="4" ry="6" />
      <ellipse cx="1361" cy="1000" rx="4" ry="7" />
      <ellipse cx="1538" cy="948" rx="6" ry="6" />
      <polygon points="2120,1030 2140,1018 2146,1035 2125,1040" />
      <ellipse cx="2216" cy="842" rx="9" ry="5" />
      <ellipse cx="1931" cy="817" rx="8" ry="4" transform="rotate(25 1931 817)" />
      <ellipse cx="2042" cy="985" rx="6" ry="9" />
      <ellipse cx="1976" cy="1030" rx="5" ry="6" />
      <polygon points="1898,1048 1905,1058 1898,1068 1891,1058" />
    </g>
    <g fill="none" stroke="#a8cfe2" strokeWidth="1" strokeLinejoin="round" opacity="0.8">
      {RIVERS.map((d, i) => (
        <path key={i} d={d} />
      ))}
    </g>
    <g fill="none" stroke="#f8cd9c" strokeWidth="1" strokeLinejoin="round">
      {MINOR.map((d, i) => (
        <path key={i} d={d} />
      ))}
    </g>
    <path
      d="M1698 603 L1717 623 L1767 633 L1800 663 L1837 680 L1870 695 L1903 700 L1917 692 L1970 703 L1987 700"
      fill="none"
      stroke="#aad3df"
      strokeWidth="2.500"
    />
    <Lines items={A} tf="translate(1170 380) scale(.3827 .3333)" />
    <Lines items={B} tf="translate(1770 380) scale(.3333)" />
    <Lines items={C} tf="translate(1170 740) scale(.3827 .3333)" />
    <Lines items={D} tf="translate(1770 740) scale(.368 .3333)" />
    <text x="1222" y="448" fontFamily="Noto Sans, sans-serif" fontSize="10.500" fill="#444">
      spils
    </text>
    {LABELS.map(([t, x, y, k], i) => (
      <MapText key={i} x={x} y={y} $kind={k}>
        {t}
      </MapText>
    ))}
    <g transform="translate(1695 558)">
      <path d="M11 0C4.900 0 0 4.900 0 11c0 8 11 23 11 23s11-15 11-23C22 4.900 17.100 0 11 0z" fill="#009500" />
      <circle cx="11" cy="11.500" r="4.500" fill="#b9cfc0" />
    </g>
  </MapSvg>
);

const Tools = () => (
  <PanelTools>
    <Gear />
    <Dots />
  </PanelTools>
);

const PanelHeader = ({ title }: { title: string }) => (
  <PanelHead>
    <PanelTitle>{title}</PanelTitle>
    <Tools />
  </PanelHead>
);

const STATUS_ROWS: [string, string, string, string, string, string][] = [
  ["Всего узлов сети", "2", "0", "0", "0", "2"],
  ["Агент (активный)", "0", "0", "-", "0", "0"],
  ["Агент (пассивный)", "2", "0", "0", "0", "2"],
  ["SNMP", "0", "0", "0", "0", "0"],
  ["JMX", "0", "0", "0", "0", "0"],
  ["IPMI", "0", "0", "0", "0", "0"],
];

const JOURNAL = ["Время", "Действие", "Способ оповещений", "Получатель", "Сообщение", "Состояние", "Инфо"];
const PROBLEMS = ["", "Время", "Время восстановления", "Состояние", "Инфо", "Узел сети", "Проблема • Важность", "Длительность", "Обновить", "Действия"];

const HeadCols = ({ names, cols, pad }: { names: string[]; cols: string; pad: number }) => (
  <ColumnsHead $cols={cols} $pad={pad}>
    {names.map((n, i) => (
      <span key={i}>
        {n}
        {n === "Время" && <Arrow>▼</Arrow>}
      </span>
    ))}
  </ColumnsHead>
);

const NoData = () => (
  <Empty>
    <Search />
    <EmptyText>Данные не найдены</EmptyText>
  </Empty>
);

export default function App() {
  return (
    <Page>
      <Global />
      <Header>
        <Title>Новая панель</Title>
        <HeaderIcon>?</HeaderIcon>
        <HeaderIcon>
          <Gear size={15} />
        </HeaderIcon>
        <AddButton>
          <AddMain>
            <Plus size={10} w={1.500} />
            Добавить
          </AddMain>
          <AddCaret>
            <svg width="10" height="6" viewBox="0 0 10 6" fill="none" stroke="currentColor" strokeWidth="1.800" aria-hidden>
              <path d="M1 1l4 4 4-4" />
            </svg>
          </AddCaret>
        </AddButton>
        <SaveButton>Сохранить изменения</SaveButton>
        <CancelLink>Отмена</CancelLink>
      </Header>
      <Crumbs>
        <CrumbLink>Все панели</CrumbLink>
        <CrumbSep>/</CrumbSep>
        <CrumbCurrent>Новая панель</CrumbCurrent>
      </Crumbs>
      <Tab>
        Страница 1
        <svg width="15" height="4" viewBox="0 0 15 4" fill="#768d99" aria-hidden>
          <circle cx="2" cy="2" r="1.800" />
          <circle cx="7.500" cy="2" r="1.800" />
          <circle cx="13" cy="2" r="1.800" />
        </svg>
      </Tab>
      <Dashboard>
        <Row>
          <Panel $w={740} $h={272}>
            <PanelHeader title="Status" />
            <StatusTable>
              <colgroup>
                <col width="127" />
                <col width="122" />
                <col width="122" />
                <col width="123" />
                <col width="122" />
                <col width="122" />
              </colgroup>
              <thead>
                <HeadRow>
                  <Th />
                  <Th $bg="#34af67">Доступно</Th>
                  <Th $bg="#d64e4e">Недоступен</Th>
                  <Th $bg="#f4a50b">Смешанные</Th>
                  <Th $bg="#757575">Неизвестно</Th>
                  <Th>Всего</Th>
                </HeadRow>
              </thead>
              <tbody>
                {STATUS_ROWS.map((r) => (
                  <BodyRow key={r[0]}>
                    <LabelCell>{r[0]}</LabelCell>
                    {r.slice(1).map((v, i) => (
                      <ValueCell key={i}>{v}</ValueCell>
                    ))}
                  </BodyRow>
                ))}
              </tbody>
            </StatusTable>
          </Panel>
          <Panel $w={578} $h={272}>
            <PanelHeader title="Дерево навигации карт сетей" />
            <TreeRow>
              <TreeName>root</TreeName>
              <TreeTools>
                <Plus />
                <Copy />
              </TreeTools>
            </TreeRow>
          </Panel>
          <Panel $w={414} $h={272}>
            <PanelHeader title="Локальное" />
            <ClockWrap>
              <Clock />
            </ClockWrap>
          </Panel>
        </Row>
        <Row>
          <Column>
            <Panel $w={1163} $h={343}>
              <PanelHeader title="Журнал действий" />
              <HeadCols names={JOURNAL} cols="135px 140px 279px 170px 170px 158px 1fr" pad={10} />
              <NoData />
            </Panel>
            <Panel $w={1163} $h={342}>
              <PanelHeader title="Проблемы" />
              <HeadCols names={PROBLEMS} cols="81px 70px 214px 108px 62px 97px 200px 136px 96px 1fr" pad={0} />
              <NoData />
            </Panel>
          </Column>
          <Panel $w={1065} $h={692}>
            <PanelHeader title="Геокарта" />
            <MapArea>
              <GeoMap />
              <ZoomBox>
                <ZoomBtn $first>+</ZoomBtn>
                <ZoomBtn>−</ZoomBtn>
              </ZoomBox>
              <FilterBtn>
                <svg width="18" height="16" viewBox="0 0 18 16" fill="none" stroke="currentColor" strokeWidth="1.300" aria-hidden>
                  <path d="M1 1h16l-6 7v7l-4-1.500V8z" />
                </svg>
              </FilterBtn>
              <Attribution>
                <AttrLink>Leaflet</AttrLink> | © <AttrLink>OpenStreetMap</AttrLink> contributors
              </Attribution>
            </MapArea>
          </Panel>
        </Row>
      </Dashboard>
      <ScrollEdge />
    </Page>
  );
}
